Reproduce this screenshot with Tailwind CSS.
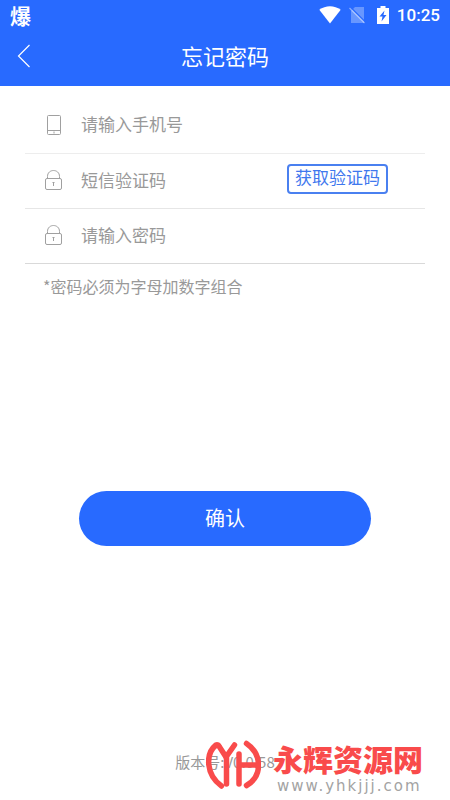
<!DOCTYPE html>
<html lang="zh-CN">
<head>
<meta charset="utf-8">
<meta name="viewport" content="width=device-width, initial-scale=1">
<title>忘记密码</title>
<script src="https://cdn.jsdelivr.net/npm/@tailwindcss/browser@4"></script>
</head>
<body class="relative flex min-h-screen flex-col bg-white font-['Noto_Sans_CJK_SC',sans-serif] text-[#999999]">
  <header class="bg-[#286aff] text-white">
    <div class="flex h-[30px] items-center justify-between px-2.5">
      <span class="text-[21px] leading-[30px] font-bold">爆</span>
      <div class="flex items-center">
        <svg class="h-[18px] w-[22px]" viewBox="0 0 22 18" fill="currentColor" aria-hidden="true"><path d="M0.3 3.800C6.500-.9 15.500-.9 21.700 3.800L11 17.500Z"/></svg>
        <svg class="ml-2 h-[18px] w-4" viewBox="0 0 16 18" aria-hidden="true"><path d="M6 1H15V17H2V5Z" fill="#fff" fill-opacity=".3"/><path d="M1.300 1L16 15.700" stroke="#286aff" stroke-width="1.200"/><path d="M0.500 2L15.500 17" stroke="#fff" stroke-opacity=".45" stroke-width="1.300"/></svg>
        <svg class="ml-3 h-[18px] w-3" viewBox="0 0 12 18" aria-hidden="true"><path d="M3.500 0H8.500V2H12V18H0V2H3.500Z" fill="#fff"/><path d="M7.500 4.500L2.500 10.500H5.500L4.500 15.500L9.500 9H6.500Z" fill="#286aff"/></svg>
        <span class="ml-2 font-[Roboto,sans-serif] text-[17px] leading-[30px] font-medium">10:25</span>
      </div>
    </div>
    <div class="grid h-14 grid-cols-[48px_1fr_48px] items-start">
      <a href="#" aria-label="返回" class="flex h-[52px] items-center pl-[17px]">
        <svg class="h-6 w-3.5" viewBox="0 0 14 24" fill="none" stroke="currentColor" stroke-width="1.200" aria-hidden="true"><path d="M12.500 1L1.500 12L12.500 23"/></svg>
      </a>
      <h1 class="text-center text-[22px] leading-[50px]">忘记密码</h1>
    </div>
  </header>

  <main class="flex flex-1 flex-col">
    <form class="flex flex-col">
      <div class="mx-[25px] mt-3 flex h-14 items-center border-b border-[#ededed] pb-0.5 pl-[18px]">
        <label for="phone" aria-label="手机号" class="mr-[18px] w-5 shrink-0">
          <svg class="size-[22px]" viewBox="0 0 22 22" fill="none" stroke="#a0a0a0" aria-hidden="true"><rect x="4.500" y="1.500" width="13" height="19" rx="1"/><path d="M4.500 16.500H17.500M11 17.500V19.500"/></svg>
        </label>
        <input id="phone" type="tel" placeholder="请输入手机号" class="h-10 min-w-0 flex-1 pb-0.5 text-[17px] outline-none placeholder:text-[#999999]">
      </div>
      <div class="mx-[25px] flex h-[55px] items-center border-b border-[#e6e6e6] pb-0.5 pl-[18px]">
        <label for="sms" aria-label="短信验证码" class="mr-[18px] w-5 shrink-0">
          <svg class="size-[22px]" viewBox="0 0 22 22" fill="none" stroke="#a0a0a0" aria-hidden="true"><rect x="2.500" y="9.500" width="16" height="11" rx="1.500"/><path d="M4.500 9.500V7.500C4.500-.5 16.500-.5 16.500 7.500V9.500"/><path d="M10.500 13V17M9.500 13.500H11.500"/></svg>
        </label>
        <input id="sms" type="text" placeholder="短信验证码" class="h-10 min-w-0 flex-1 pb-0.5 text-[17px] outline-none placeholder:text-[#999999]">
        <button type="button" class="mr-[37px] mb-0.5 h-[30px] w-[101px] shrink-0 rounded-sm border-2 border-[#4a80f0] pb-1 text-[17px] leading-[22px] text-[#3f78ee]">获取验证码</button>
      </div>
      <div class="mx-[25px] flex h-[55px] items-center border-b border-[#d9d9d9] pb-0.5 pl-[18px]">
        <label for="password" aria-label="密码" class="mr-[18px] w-5 shrink-0">
          <svg class="size-[22px]" viewBox="0 0 22 22" fill="none" stroke="#a0a0a0" aria-hidden="true"><rect x="2.500" y="9.500" width="16" height="11" rx="1.500"/><path d="M4.500 9.500V7.500C4.500-.5 16.500-.5 16.500 7.500V9.500"/><path d="M10.500 13V17M9.500 13.500H11.500"/></svg>
        </label>
        <input id="password" type="password" placeholder="请输入密码" class="h-10 min-w-0 flex-1 pb-0.5 text-[17px] outline-none placeholder:text-[#999999]">
      </div>
      <p class="mt-2.5 px-[43px] text-base">*密码必须为字母加数字组合</p>
      <button type="submit" class="mx-[79px] mt-[193px] h-[55px] rounded-full bg-[#286aff] pb-0.5 text-xl text-white">确认</button>
    </form>
  </main>

  <footer class="pb-[26px] text-center text-[15px] leading-6">版本号:V0.0.58</footer>

  <div class="absolute right-[27px] bottom-1.5 flex items-end gap-3">
    <svg class="mb-1 h-[50px] w-[55px]" viewBox="0 0 55 50" fill="none" stroke="#f94b4b" stroke-width="5.500" stroke-linecap="round" aria-hidden="true">
      <path d="M15.500 46C0 35-1 14 10 5Q12 4 13.500 7L20 17L28.500 5"/>
      <path d="M20.500 18V44M33 14V44M33 25H51"/>
      <path d="M40.500 3.500C56 14 57 36 40.500 45.500"/>
    </svg>
    <div class="flex flex-col gap-0.5">
      <span class="text-[30px] leading-9 font-black text-[#f94b4b]">永辉资源网</span>
      <span class="pl-1 font-['DejaVu_Sans',sans-serif] text-[15px] leading-4 tracking-[2px] text-[#a3a3a3]">www.yhkjjj.com</span>
    </div>
  </div>
</body>
</html>
